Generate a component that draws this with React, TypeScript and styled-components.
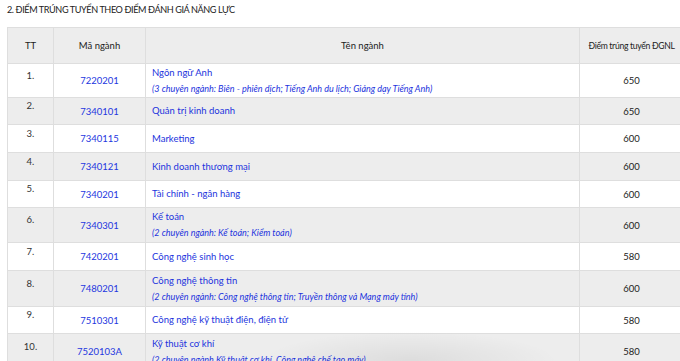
import React from "react";
import styled, { createGlobalStyle } from "styled-components";

const Global = createGlobalStyle`
  html, body { margin: 0; padding: 0; background: #fff; overflow: hidden; }
  body { font-family: "Lato", "Liberation Sans", sans-serif; color: #222; }
`;

const Page = styled.div`
  position: relative;
  width: 680px;
  height: 361px;
  overflow: hidden;
  padding: 4px 0 0 7px;
  box-sizing: border-box;
`;

const Title = styled.h2`
  margin: 0 0 11px 0;
  font-size: 9.1px;
  font-weight: 400;
  line-height: 12px;
  color: #222;
  letter-spacing: -0.4px;
`;

const Table = styled.table`
  border-collapse: collapse;
  table-layout: fixed;
  width: 676px;
  font-size: 9.5px;
`;

const HeadRow = styled.tr`
  height: 36px;
  background: #ededed;
`;

const Row = styled.tr<{ $h: number; $alt: boolean }>`
  height: ${(p) => p.$h}px;
  background: ${(p) => (p.$alt ? "#ededed" : "#fff")};
`;

const Th = styled.th<{ $tight?: boolean }>`
  border: 1px solid #dedede;
  font-weight: 400;
  color: #222;
  text-align: center;
  vertical-align: middle;
  padding: 0;
  font-size: ${(p) => (p.$tight ? "8.6px" : "9.5px")};
  letter-spacing: ${(p) => (p.$tight ? "-0.3px" : "0")};
  white-space: nowrap;
`;

const Num = styled.td`
  border: 1px solid #dedede;
  text-align: center;
  vertical-align: middle;
  padding: 0 0 11px 0;
  color: #333;
`;

const Code = styled.td`
  border: 1px solid #dedede;
  text-align: center;
  vertical-align: middle;
  padding: 0;
  color: #2436e0;
`;

const Name = styled.td`
  border: 1px solid #dedede;
  text-align: left;
  vertical-align: middle;
  padding: 0 6px;
  color: #2233dd;
  line-height: 16px;
`;

const Sub = styled.div`
  font-style: italic;
  font-size: 9px;
`;

const Score = styled.td`
  border: 1px solid #dedede;
  text-align: center;
  vertical-align: middle;
  padding: 0;
  color: #222;
`;

const Shade = styled.div`
  position: absolute;
  left: 260px;
  bottom: -30px;
  width: 300px;
  height: 60px;
  border-radius: 50%;
  background: radial-gradient(ellipse at center, rgba(0,0,0,0.07) 0%, rgba(0,0,0,0) 70%);
  pointer-events: none;
`;

type Item = { n: string; code: string; name: string; sub?: string; score: string; h: number };

const rows: Item[] = [
  { n: "1.", code: "7220201", name: "Ngôn ngữ Anh", sub: "(3 chuyên ngành: Biên - phiên dịch; Tiếng Anh du lịch; Giảng dạy Tiếng Anh)", score: "650", h: 34 },
  { n: "2.", code: "7340101", name: "Quản trị kinh doanh", score: "650", h: 27 },
  { n: "3.", code: "7340115", name: "Marketing", score: "600", h: 28 },
  { n: "4.", code: "7340121", name: "Kinh doanh thương mại", score: "600", h: 28 },
  { n: "5.", code: "7340201", name: "Tài chính - ngân hàng", score: "600", h: 27 },
  { n: "6.", code: "7340301", name: "Kế toán", sub: "(2 chuyên ngành: Kế toán; Kiểm toán)", score: "600", h: 35 },
  { n: "7.", code: "7420201", name: "Công nghệ sinh học", score: "580", h: 28 },
  { n: "8.", code: "7480201", name: "Công nghệ thông tin", sub: "(2 chuyên ngành: Công nghệ thông tin; Truyền thông và Mạng máy tính)", score: "600", h: 36 },
  { n: "9.", code: "7510301", name: "Công nghệ kỹ thuật điện, điện tử", score: "580", h: 27 },
  { n: "10.", code: "7520103A", name: "Kỹ thuật cơ khí", sub: "(2 chuyên ngành Kỹ thuật cơ khí, Công nghệ chế tạo máy)", score: "580", h: 36 },
];

export default function App() {
  return (
    <>
      <Global />
      <Page>
        <Title>2. ĐIỂM TRÚNG TUYỂN THEO ĐIỂM ĐÁNH GIÁ NĂNG LỰC</Title>
        <Table>
          <colgroup>
            <col style={{ width: 46 }} />
            <col style={{ width: 92 }} />
            <col style={{ width: 434 }} />
            <col style={{ width: 104 }} />
          </colgroup>
          <thead>
            <HeadRow>
              <Th>TT</Th>
              <Th>Mã ngành</Th>
              <Th>Tên ngành</Th>
              <Th $tight>Điểm trúng tuyển ĐGNL</Th>
            </HeadRow>
          </thead>
          <tbody>
            {rows.map((r, i) => (
              <Row key={r.n} $h={r.h} $alt={i % 2 === 1}>
                <Num>{r.n}</Num>
                <Code>{r.code}</Code>
                <Name>
                  <div>{r.name}</div>
                  {r.sub && <Sub>{r.sub}</Sub>}
                </Name>
                <Score>{r.score}</Score>
              </Row>
            ))}
          </tbody>
        </Table>
        <Shade />
      </Page>
    </>
  );
}
